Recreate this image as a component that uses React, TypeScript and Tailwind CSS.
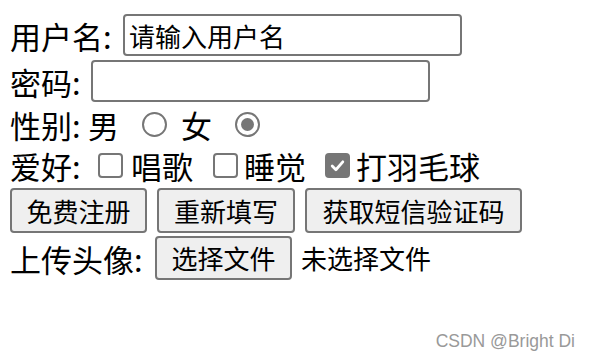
import React from "react";

const CN = { fontFamily: '"Microsoft YaHei", "Noto Sans CJK SC", sans-serif' };

function Radio({ checked }: { checked?: boolean }) {
  return (
    <span className="w-[25px] h-[25px] rounded-full border-2 border-[#767676] bg-white flex items-center justify-center shrink-0">
      {checked && <span className="w-[13px] h-[13px] rounded-full bg-[#767676]" />}
    </span>
  );
}

function Check({ checked }: { checked?: boolean }) {
  if (checked)
    return (
      <span className="w-[25px] h-[25px] rounded-[4px] bg-[#767676] flex items-center justify-center shrink-0">
        <svg width="17" height="17" viewBox="0 0 16 16">
          <path d="M3 8.5 L6.5 12 L13 4.5" fill="none" stroke="white" strokeWidth="2.6" strokeLinecap="round" strokeLinejoin="round" />
        </svg>
      </span>
    );
  return <span className="block w-[25px] h-[25px] rounded-[4px] border-2 border-[#767676] bg-white shrink-0" />;
}

function Btn({ children, w }: { children: React.ReactNode; w: string }) {
  return (
    <button className={"h-[45px] bg-[#efefef] border-2 border-[#767676] rounded-[4px] text-[26px] leading-none text-black flex items-center justify-center " + w} style={CN}>
      {children}
    </button>
  );
}

export default function App() {
  return (
    <div className="relative w-[594px] h-[360px] bg-white text-black overflow-hidden" style={CN}>
      <div className="flex flex-col pt-[12px] pl-[10px] text-[31px] leading-none">
        <div className="h-[46px] flex items-center">
          <span className="w-[113px]">用户名:</span>
          <input
            defaultValue="请输入用户名"
            className="w-[339px] h-[42px] border-2 border-[#767676] rounded-[4px] px-[4px] text-[26px] leading-none outline-none"
            style={CN}
          />
        </div>
        <div className="h-[46px] flex items-center">
          <span className="w-[81px]">密码:</span>
          <input type="password" className="w-[339px] h-[42px] border-2 border-[#767676] rounded-[4px] px-[4px] text-[26px] outline-none" />
        </div>
        <div className="h-[41px] flex items-center">
          <span className="w-[78px]">性别:</span>
          <span>男</span>
          <span className="ml-[23px] flex"><Radio /></span>
          <span className="ml-[14px]">女</span>
          <span className="ml-[23px] flex"><Radio checked /></span>
        </div>
        <div className="h-[41px] flex items-center">
          <span className="w-[88px]">爱好:</span>
          <Check />
          <span className="ml-[8px]">唱歌</span>
          <span className="ml-[20px] flex"><Check /></span>
          <span className="ml-[6px]">睡觉</span>
          <span className="ml-[19px] flex"><Check checked /></span>
          <span className="ml-[6px]">打羽毛球</span>
        </div>
        <div className="h-[49px] flex items-center gap-[10px]">
          <Btn w="w-[137px]">免费注册</Btn>
          <Btn w="w-[138px]">重新填写</Btn>
          <Btn w="w-[217px]">获取短信验证码</Btn>
        </div>
        <div className="h-[46px] flex items-center">
          <span className="w-[145px]">上传头像:</span>
          <button className="w-[137px] h-[44px] bg-[#efefef] border-2 border-[#767676] rounded-[4px] text-[26px] leading-none" style={CN}>
            选择文件
          </button>
          <span className="ml-[9px] text-[26px]">未选择文件</span>
        </div>
      </div>
      <div
        className="absolute right-[19px] top-[333px] text-[17.5px] leading-none text-[#999999]"
        style={{ fontFamily: '"Liberation Sans", Arial, sans-serif' }}
      >
        CSDN @Bright Di
      </div>
    </div>
  );
}
